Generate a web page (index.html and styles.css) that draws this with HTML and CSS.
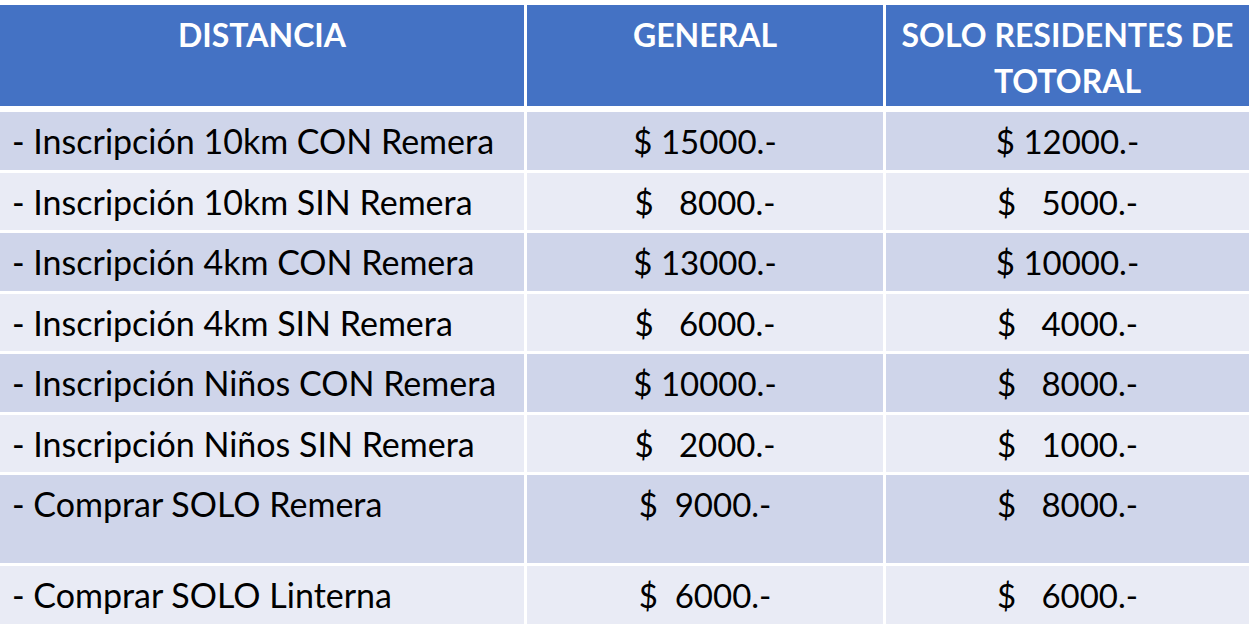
FILE: index.html
```html
<!DOCTYPE html>
<html lang="es">
<head>
<meta charset="utf-8">
<title>Precios</title>
<link rel="stylesheet" href="styles.css">
</head>
<body>
<table class="prices">
  <colgroup>
    <col class="c1"><col class="c2"><col class="c3">
  </colgroup>
  <thead>
    <tr>
      <th>DISTANCIA</th>
      <th>GENERAL</th>
      <th>SOLO RESIDENTES DE TOTORAL</th>
    </tr>
  </thead>
  <tbody>
    <tr class="odd"><td class="name">- Inscripción 10km CON Remera</td><td class="val">$ 15000.-</td><td class="val">$ 12000.-</td></tr>
    <tr class="even"><td class="name">- Inscripción 10km SIN Remera</td><td class="val">$   8000.-</td><td class="val">$   5000.-</td></tr>
    <tr class="odd"><td class="name">- Inscripción 4km CON Remera</td><td class="val">$ 13000.-</td><td class="val">$ 10000.-</td></tr>
    <tr class="even"><td class="name">- Inscripción 4km SIN Remera</td><td class="val">$   6000.-</td><td class="val">$   4000.-</td></tr>
    <tr class="odd"><td class="name">- Inscripción Niños CON Remera</td><td class="val">$ 10000.-</td><td class="val">$   8000.-</td></tr>
    <tr class="even"><td class="name">- Inscripción Niños SIN Remera</td><td class="val">$   2000.-</td><td class="val">$   1000.-</td></tr>
    <tr class="odd tall"><td class="name">- Comprar SOLO Remera</td><td class="val">$  9000.-</td><td class="val">$   8000.-</td></tr>
    <tr class="even"><td class="name">- Comprar SOLO Linterna</td><td class="val">$  6000.-</td><td class="val">$   6000.-</td></tr>
  </tbody>
</table>
</body>
</html>
```

FILE: styles.css
```css
html, body {
  margin: 0;
  padding: 0;
  background: #ffffff;
  overflow: hidden;
}

body {
  width: 1249px;
  height: 641px;
  font-family: Lato, "Liberation Sans", sans-serif;
  color: #000000;
}

.prices {
  border-collapse: separate;
  border-spacing: 3px;
  margin: 2px 0 0 -3px;
  table-layout: fixed;
  width: 1255px;
}

.c1 { width: 524px; }
.c2 { width: 356px; }
.c3 { width: 363px; }

.prices th {
  background: #4472c4;
  background-clip: padding-box;
  border-bottom: 3px solid #ffffff;
  color: #ffffff;
  font-weight: 700;
  font-size: 32px;
  line-height: 46px;
  height: 104px;
  box-sizing: border-box;
  padding: 7px 4px 0;
  vertical-align: top;
  text-align: center;
}

.prices td {
  height: 57.5px;
  box-sizing: border-box;
  padding: 9px 12px 0;
  vertical-align: top;
  font-size: 34px;
  line-height: 40px;
  white-space: pre;
}

.prices td.val { font-size: 33px; }

.prices tr.tall td { height: 88px; }

.odd td { background: #cfd5ea; }
.even td { background: #e9ebf5; }

.name { text-align: left; }
.val { text-align: center; }
```
